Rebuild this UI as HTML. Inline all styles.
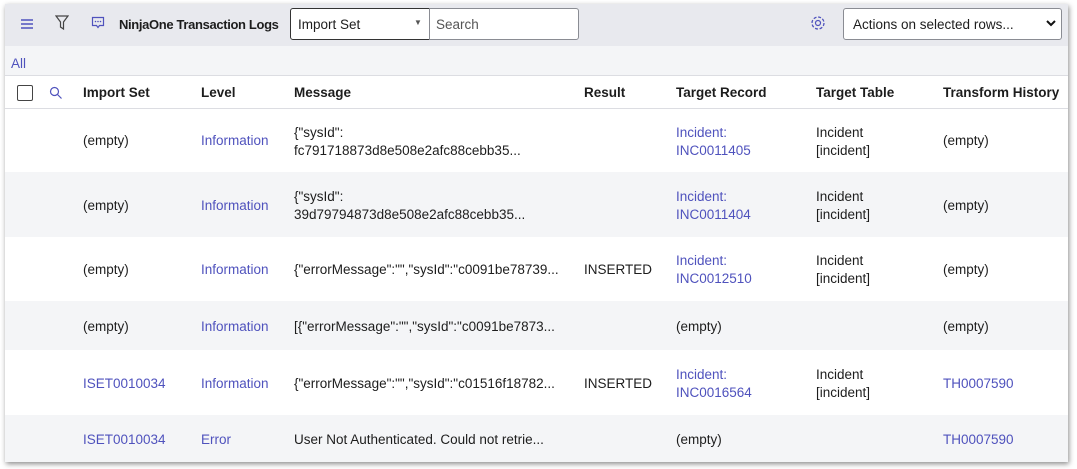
<!DOCTYPE html>
<html><head><meta charset="utf-8"><style>
*{margin:0;padding:0;box-sizing:border-box}
body{width:1077px;height:469px;background:#fff;font-family:"Liberation Sans",sans-serif;font-size:13.5px;color:#1d1d1d;position:relative;overflow:hidden}
.frame{position:absolute;left:5px;top:4px;width:1063px;height:458px;background:#fff;box-shadow:1px 2px 5px rgba(0,0,0,.45);overflow:hidden}
.hdr{position:absolute;left:0;top:0;width:100%;height:42px;background:#e8e9ee}
.all{position:absolute;left:0;top:42px;width:100%;height:30px;background:#f4f5f7;border-bottom:1px solid #dcdde2}
.a{position:absolute;white-space:nowrap}
.t{margin-top:1px}
.lnk{color:#4f52bd}
.row{position:absolute;left:0;width:100%}
.g{background:#f4f5f7}
.th{font-weight:bold;top:81px}
</style></head><body>
<div class="frame">
<div class="hdr"></div>
<svg class="a" style="left:15px;top:14px" width="14" height="12"><path d="M1 2h12M1 6h12M1 10h12" stroke="#4f52bd" stroke-width="1.5"/></svg>
<svg class="a" style="left:50px;top:11px" width="14" height="16"><path d="M1 1h12L8.5 7v7L5.5 12V7z" fill="none" stroke="#444" stroke-width="1.2"/></svg>
<svg class="a" style="left:86px;top:12px" width="14" height="14"><path d="M1.5 1.5h11v8h-4l-1.5 2-1.5-2h-4z" fill="none" stroke="#4f52bd" stroke-width="1.2"/><circle cx="4.5" cy="5.5" r=".8" fill="#4f52bd"/><circle cx="7" cy="5.5" r=".8" fill="#4f52bd"/><circle cx="9.5" cy="5.5" r=".8" fill="#4f52bd"/></svg>
<div class="a" style="left:114px;top:13px;font-weight:bold;font-size:13px;letter-spacing:-0.35px">NinjaOne Transaction Logs</div>
<div class="a" style="left:285px;top:4px;width:140px;height:32px;background:#fff;border:1px solid #333;border-radius:3px 0 0 3px"></div>
<div class="a" style="left:293px;top:13px">Import Set</div>
<div class="a" style="left:409px;top:14px;font-size:8px;color:#555">▼</div>
<div class="a" style="left:424px;top:4px;width:150px;height:32px;background:#fff;border:1px solid #8a8c93;border-radius:0 3px 3px 0"></div>
<div class="a" style="left:431px;top:13px;color:#555">Search</div>
<svg class="a" style="left:805px;top:11px" width="16" height="16"><circle cx="8" cy="8" r="6" fill="none" stroke="#4f52bd" stroke-width="1.3" stroke-dasharray="3 1.7"/><circle cx="8" cy="8" r="2.5" fill="none" stroke="#4f52bd" stroke-width="1.2"/></svg>
<div class="a" style="left:838px;top:4px;width:219px;height:32px;background:#fff;border:1px solid #8a8c93;border-radius:3px"></div>
<div class="a" style="left:848px;top:13px">Actions on selected rows...</div>
<svg class="a" style="left:1041px;top:16px" width="10" height="8"><path d="M1 1l4 4 4-4" fill="none" stroke="#111" stroke-width="2"/></svg>
<div class="all"></div>
<div class="a lnk" style="left:6px;top:52px">All</div>
<div class="row" style="top:104px;height:1px;background:#dcdde2"></div>
<div class="a" style="left:12px;top:81px;width:16px;height:16px;border:1.3px solid #444;border-radius:2px;background:#fff"></div>
<svg class="a" style="left:44px;top:82px" width="14" height="14"><circle cx="5.5" cy="5.5" r="4" fill="none" stroke="#4f52bd" stroke-width="1.2"/><path d="M8.5 8.5l4 4" stroke="#4f52bd" stroke-width="1.2"/></svg>
<div class="a th" style="left:78px">Import Set</div>
<div class="a th" style="left:196px">Level</div>
<div class="a th" style="left:289px">Message</div>
<div class="a th" style="left:579px">Result</div>
<div class="a th" style="left:671px">Target Record</div>
<div class="a th" style="left:811px">Target Table</div>
<div class="a th" style="left:938px">Transform History</div>

<div class="row g" style="top:168px;height:65px"></div>
<div class="row g" style="top:297px;height:49px"></div>
<div class="row g" style="top:411px;height:47px"></div>

<div class="a t" style="left:78px;top:128px">(empty)</div>
<div class="a t lnk" style="left:196px;top:128px">Information</div>
<div class="a t" style="left:289px;top:119px;line-height:18px">{"sysId":<br>fc791718873d8e508e2afc88cebb35...</div>
<div class="a t lnk" style="left:671px;top:119px;line-height:18px">Incident:<br>INC0011405</div>
<div class="a t" style="left:811px;top:119px;line-height:18px">Incident<br>[incident]</div>
<div class="a t" style="left:938px;top:128px">(empty)</div>

<div class="a t" style="left:78px;top:193px">(empty)</div>
<div class="a t lnk" style="left:196px;top:193px">Information</div>
<div class="a t" style="left:289px;top:183px;line-height:18px">{"sysId":<br>39d79794873d8e508e2afc88cebb35...</div>
<div class="a t lnk" style="left:671px;top:183px;line-height:18px">Incident:<br>INC0011404</div>
<div class="a t" style="left:811px;top:183px;line-height:18px">Incident<br>[incident]</div>
<div class="a t" style="left:938px;top:193px">(empty)</div>

<div class="a t" style="left:78px;top:257px">(empty)</div>
<div class="a t lnk" style="left:196px;top:257px">Information</div>
<div class="a t" style="left:289px;top:257px">{"errorMessage":"","sysId":"c0091be78739...</div>
<div class="a t" style="left:579px;top:257px">INSERTED</div>
<div class="a t lnk" style="left:671px;top:247px;line-height:18px">Incident:<br>INC0012510</div>
<div class="a t" style="left:811px;top:247px;line-height:18px">Incident<br>[incident]</div>
<div class="a t" style="left:938px;top:257px">(empty)</div>

<div class="a t" style="left:78px;top:314px">(empty)</div>
<div class="a t lnk" style="left:196px;top:314px">Information</div>
<div class="a t" style="left:289px;top:314px">[{"errorMessage":"","sysId":"c0091be7873...</div>
<div class="a t" style="left:671px;top:314px">(empty)</div>
<div class="a t" style="left:938px;top:314px">(empty)</div>

<div class="a t lnk" style="left:78px;top:371px">ISET0010034</div>
<div class="a t lnk" style="left:196px;top:371px">Information</div>
<div class="a t" style="left:289px;top:371px">{"errorMessage":"","sysId":"c01516f18782...</div>
<div class="a t" style="left:579px;top:371px">INSERTED</div>
<div class="a t lnk" style="left:671px;top:361px;line-height:18px">Incident:<br>INC0016564</div>
<div class="a t" style="left:811px;top:361px;line-height:18px">Incident<br>[incident]</div>
<div class="a t lnk" style="left:938px;top:371px">TH0007590</div>

<div class="a t lnk" style="left:78px;top:427px">ISET0010034</div>
<div class="a t lnk" style="left:196px;top:427px">Error</div>
<div class="a t" style="left:289px;top:427px">User Not Authenticated. Could not retrie...</div>
<div class="a t" style="left:671px;top:427px">(empty)</div>
<div class="a t lnk" style="left:938px;top:427px">TH0007590</div>
</div>
</body></html>
